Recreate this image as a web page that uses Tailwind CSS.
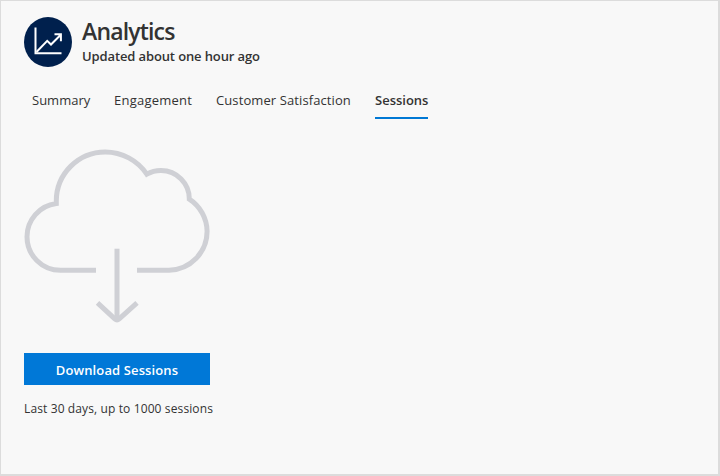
<!DOCTYPE html>
<html lang="en">
<head>
<meta charset="utf-8">
<title>Analytics</title>
<script src="https://cdn.jsdelivr.net/npm/@tailwindcss/browser@4"></script>
</head>
<body class="h-[476px] w-[720px] overflow-hidden border-t border-r-2 border-b-2 border-l border-[#dcdcdc] bg-[#f8f8f8] font-['Open_Sans','Noto_Sans',sans-serif] text-[#333333]">
<header class="flex pt-4 pl-[23px]">
  <svg class="h-[50px] w-12 shrink-0" viewBox="0 0 48 50" fill="none" stroke="#fff">
    <ellipse cx="24" cy="25" rx="24" ry="25" fill="#00204d" stroke="none"/>
    <path d="M11.5 10.5V36.3H37.5" stroke-width="2"/>
    <path d="M12.5 35L23.2 23.8L27 27.5L36.5 18M30.5 17.3H36.9V24.2" stroke-width="2"/>
  </svg>
  <div class="ml-[10px] whitespace-nowrap">
    <h1 class="h-7 text-[23px] leading-7 font-semibold tracking-[-0.83px]">Analytics</h1>
    <p class="mt-[1px] text-[13px] leading-5 font-semibold tracking-[-0.12px]">Updated about one hour ago</p>
  </div>
</header>
<nav class="mt-[23px] ml-[31px] flex h-[29px] gap-6 text-[13px] leading-5 whitespace-nowrap">
  <a class="w-[58px]">Summary</a>
  <a class="w-[78px] tracking-[0.23px]">Engagement</a>
  <a class="w-[135px] tracking-[0.1px]">Customer Satisfaction</a>
  <a class="w-[53px] border-b-2 border-[#0078d4] font-semibold">Sessions</a>
</nav>
<main class="mt-[29px] ml-[23px] w-[190px]">
  <svg class="block h-[176px] w-[186px]" viewBox="24 148 186 176" fill="none" stroke="#cfd0d5" stroke-width="5">
    <path d="M96 270.3H60.5A33.5 33.5 0 0 1 27 236.8A33.5 33.5 0 0 1 56.3 203.6V201A49 49 0 0 1 105.2 152A50 50 0 0 1 146.8 174.2A28.3 28.3 0 0 1 161 170.5A28.4 28.4 0 0 1 189.3 199.2A39 39 0 0 1 207.1 231.3A39 39 0 0 1 169 270.3H137"/>
    <path d="M117 248.7V320"/>
    <path d="M97.5 302.8L114.8 318.8Q117 320.8 119.2 318.8L137 302.8"/>
  </svg>
  <button class="mt-[29px] block h-8 w-[186px] bg-[#0078d7] text-center text-[13px] leading-[34px] font-semibold tracking-[0.12px] text-white">Download Sessions</button>
  <p class="mt-[14px] text-[12px] leading-5 tracking-[0.12px] whitespace-nowrap">Last 30 days, up to 1000 sessions</p>
</main>
</body>
</html>
